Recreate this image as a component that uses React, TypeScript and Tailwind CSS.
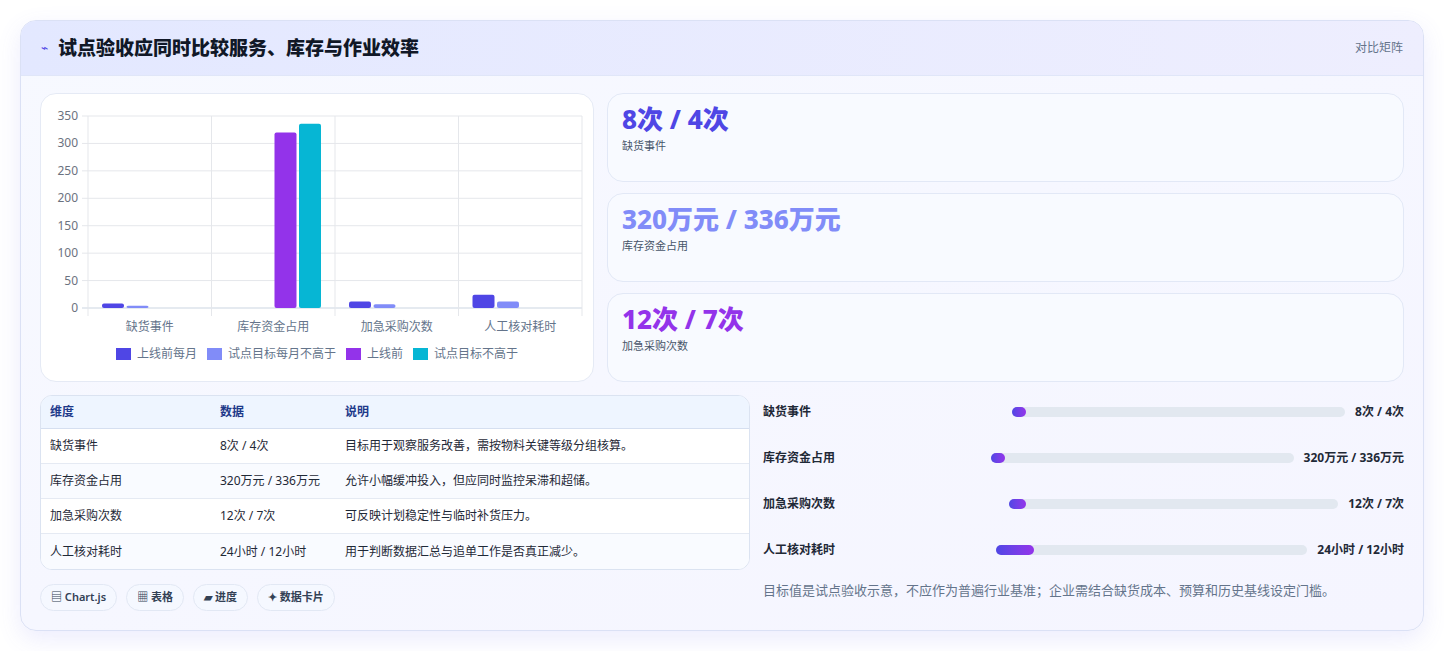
import React from "react";

const F = { fontFamily: '"Noto Sans", "Noto Sans CJK SC", sans-serif' };
const colors = ["#4f46e5", "#818cf8", "#9333ea", "#06b6d4"];
const data = [[8, 0, 12, 24], [4, 0, 7, 12], [0, 320, 0, 0], [0, 336, 0, 0]];
const cats = ["缺货事件", "库存资金占用", "加急采购次数", "人工核对耗时"];

function Chart() {
  const x0 = 47, x1 = 541, yTop = 22, y0 = 214;
  const s = (y0 - yTop) / 350;
  const cw = (x1 - x0) / 4;
  return (
    <svg width="553" height="245" className="block">
      {[0, 50, 100, 150, 200, 250, 300, 350].map((v) => (
        <g key={v}>
          <line x1={x0 - 6} x2={x1} y1={y0 - v * s} y2={y0 - v * s} stroke={v === 0 ? "#cbd5e1" : "#e5e7eb"} />
          <text x={x0 - 10} y={y0 - v * s + 4} textAnchor="end" fontSize="12" fill="#6b7280" style={F}>{v}</text>
        </g>
      ))}
      {[0, 1, 2, 3, 4].map((i) => (
        <line key={i} x1={x0 + i * cw} x2={x0 + i * cw} y1={yTop} y2={y0 + 8} stroke="#e5e7eb" />
      ))}
      {cats.map((c, ci) => (
        <g key={c}>
          {data.map((ds, di) => {
            const v = ds[ci];
            if (!v) return null;
            const h = v * s;
            return <rect key={di} x={x0 + ci * cw + 14 + di * 24.5} y={y0 - h} width="22" height={h} rx="2" fill={colors[di]} />;
          })}
          <text x={x0 + ci * cw + cw / 2} y={237} textAnchor="middle" fontSize="12" fill="#64748b" style={F}>{c}</text>
        </g>
      ))}
    </svg>
  );
}

const cards = [
  ["8次 / 4次", "缺货事件", "text-[#4f46e5]"],
  ["320万元 / 336万元", "库存资金占用", "text-[#818cf8]"],
  ["12次 / 7次", "加急采购次数", "text-[#9333ea]"],
];
const rows = [
  ["缺货事件", "8次 / 4次", "目标用于观察服务改善，需按物料关键等级分组核算。"],
  ["库存资金占用", "320万元 / 336万元", "允许小幅缓冲投入，但应同时监控呆滞和超储。"],
  ["加急采购次数", "12次 / 7次", "可反映计划稳定性与临时补货压力。"],
  ["人工核对耗时", "24小时 / 12小时", "用于判断数据汇总与追单工作是否真正减少。"],
];
const bars = [
  ["缺货事件", "8次 / 4次", 2],
  ["库存资金占用", "320万元 / 336万元", 1],
  ["加急采购次数", "12次 / 7次", 5],
  ["人工核对耗时", "24小时 / 12小时", 12],
];

export default function App() {
  return (
    <div className="w-[1444px] h-[651px] bg-white pt-5 px-5" style={F}>
      <div className="h-[611px] rounded-2xl border border-[#dbe1f5] bg-gradient-to-br from-[#f7f9ff] to-[#f5f5ff] shadow-[0_8px_24px_rgba(99,102,241,0.12)] overflow-hidden">
        <div className="h-[55px] flex items-center justify-between px-5 bg-gradient-to-r from-[#e3e8ff] to-[#eeeefe] border-b border-[#e0e6f8]">
          <div className="flex items-center gap-2.5">
            <span className="text-[#4f46e5] text-xs">⌁</span>
            <span className="text-[19px] font-extrabold text-[#111827]">试点验收应同时比较服务、库存与作业效率</span>
          </div>
          <span className="text-xs text-[#64748b]">对比矩阵</span>
        </div>
        <div className="px-[19px] pt-[17px] flex flex-col gap-[13px]">
          <div className="flex gap-[13px]">
            <div className="w-[554px] h-[289px] rounded-2xl bg-white border border-[#e5eaf5]">
              <Chart />
              <div className="mt-[6px] flex justify-center gap-2.5 text-[12px] text-[#64748b]">
                {["上线前每月", "试点目标每月不高于", "上线前", "试点目标不高于"].map((l, i) => (
                  <div key={l} className="flex items-center gap-1.5">
                    <span className="w-[15px] h-[12px]" style={{ background: colors[i] }} />
                    {l}
                  </div>
                ))}
              </div>
            </div>
            <div className="flex-1 flex flex-col gap-[11px]">
              {cards.map(([v, l, c]) => (
                <div key={l} className="h-[89px] rounded-2xl bg-[#f8faff] border border-[#e2e8f6] px-[14px] pt-2">
                  <div className={`text-[26px] font-extrabold leading-[34px] ${c}`}>{v}</div>
                  <div className="text-[11px] text-[#475569] mt-0.5">{l}</div>
                </div>
              ))}
            </div>
          </div>
          <div className="flex gap-[13px]">
            <div className="w-[710px]">
              <div className="rounded-xl border border-[#dbe3f1] bg-white overflow-hidden text-[12px] text-[#1f2937]">
                <div className="flex h-[33px] items-center bg-[#eef5ff] border-b border-[#d5dff0] font-semibold text-[#1e3a8a]">
                  <div className="w-[179px] pl-[9px]">维度</div>
                  <div className="w-[125px]">数据</div>
                  <div className="flex-1">说明</div>
                </div>
                {rows.map((r, i) => (
                  <div key={i} className={`flex h-[35px] items-center ${i < 3 ? "border-b border-[#e5eaf3]" : ""} ${i % 2 ? "bg-[#f9fbff]" : ""}`}>
                    <div className="w-[179px] pl-[9px]">{r[0]}</div>
                    <div className="w-[125px]">{r[1]}</div>
                    <div className="flex-1">{r[2]}</div>
                  </div>
                ))}
              </div>
              <div className="flex gap-[9px] mt-[14px]">
                {["▤ Chart.js", "▦ 表格", "▰ 进度", "✦ 数据卡片"].map((t) => (
                  <span key={t} className="h-[27px] px-2.5 flex items-center rounded-full bg-[#f5f8ff] border border-[#e2e8f4] text-[11px] font-semibold text-[#334155]">{t}</span>
                ))}
              </div>
            </div>
            <div className="flex-1 pt-[8px]">
              <div className="flex flex-col gap-[28px]">
                {bars.map(([l, v, p]) => (
                  <div key={l as string} className="flex items-center gap-2 h-[18px]">
                    <div className="flex-1 text-[12px] font-semibold text-[#1f2937]">{l}</div>
                    <div className="flex-[1.38] h-[10px] rounded-full bg-[#e2e8f0]">
                      <div className="h-full rounded-full bg-gradient-to-r from-[#4f46e5] to-[#9333ea] min-w-[14px]" style={{ width: `${p}%` }} />
                    </div>
                    <div className="text-[12px] font-bold text-[#1f2937] pl-0.5">{v}</div>
                  </div>
                ))}
              </div>
              <div className="mt-[22px] text-[13px] text-[#64748b]">目标值是试点验收示意，不应作为普遍行业基准；企业需结合缺货成本、预算和历史基线设定门槛。</div>
            </div>
          </div>
        </div>
      </div>
    </div>
  );
}
